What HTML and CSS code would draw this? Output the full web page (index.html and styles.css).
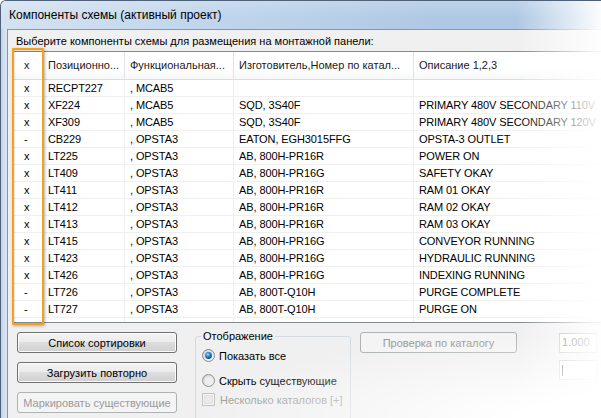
FILE: index.html
```html
<!DOCTYPE html>
<html lang="ru">
<head>
<meta charset="utf-8">
<title>Компоненты схемы</title>
<link rel="stylesheet" href="styles.css">
</head>
<body>
<div class="window">
  <div class="titlebar"><span class="title">Компоненты схемы (активный проект)</span></div>
  <div class="client">
    <div class="prompt">Выберите компоненты схемы для размещения на монтажной панели:</div>
    <div class="listview">
      <div class="lv-row lv-head">
        <div class="c c1">x</div>
        <div class="c">Позиционно...</div>
        <div class="c">Функциональная...</div>
        <div class="c">Изготовитель,Номер по катал...</div>
        <div class="c">Описание 1,2,3</div>
      </div>
      <div class="lv-row"><div class="c c1">x</div><div class="c">RECPT227</div><div class="c">, MCAB5</div><div class="c"></div><div class="c"></div></div>
      <div class="lv-row"><div class="c c1">x</div><div class="c">XF224</div><div class="c">, MCAB5</div><div class="c">SQD, 3S40F</div><div class="c">PRIMARY 480V SECONDARY 110V</div></div>
      <div class="lv-row"><div class="c c1">x</div><div class="c">XF309</div><div class="c">, MCAB5</div><div class="c">SQD, 3S40F</div><div class="c">PRIMARY 480V SECONDARY 120V</div></div>
      <div class="lv-row"><div class="c c1">-</div><div class="c">CB229</div><div class="c">, OPSTA3</div><div class="c">EATON, EGH3015FFG</div><div class="c">OPSTA-3 OUTLET</div></div>
      <div class="lv-row"><div class="c c1">x</div><div class="c">LT225</div><div class="c">, OPSTA3</div><div class="c">AB, 800H-PR16R</div><div class="c">POWER ON</div></div>
      <div class="lv-row"><div class="c c1">x</div><div class="c">LT409</div><div class="c">, OPSTA3</div><div class="c">AB, 800H-PR16G</div><div class="c">SAFETY OKAY</div></div>
      <div class="lv-row"><div class="c c1">x</div><div class="c">LT411</div><div class="c">, OPSTA3</div><div class="c">AB, 800H-PR16R</div><div class="c">RAM 01 OKAY</div></div>
      <div class="lv-row"><div class="c c1">x</div><div class="c">LT412</div><div class="c">, OPSTA3</div><div class="c">AB, 800H-PR16R</div><div class="c">RAM 02 OKAY</div></div>
      <div class="lv-row"><div class="c c1">x</div><div class="c">LT413</div><div class="c">, OPSTA3</div><div class="c">AB, 800H-PR16R</div><div class="c">RAM 03 OKAY</div></div>
      <div class="lv-row"><div class="c c1">x</div><div class="c">LT415</div><div class="c">, OPSTA3</div><div class="c">AB, 800H-PR16G</div><div class="c">CONVEYOR RUNNING</div></div>
      <div class="lv-row"><div class="c c1">x</div><div class="c">LT423</div><div class="c">, OPSTA3</div><div class="c">AB, 800H-PR16G</div><div class="c">HYDRAULIC RUNNING</div></div>
      <div class="lv-row"><div class="c c1">x</div><div class="c">LT426</div><div class="c">, OPSTA3</div><div class="c">AB, 800H-PR16G</div><div class="c">INDEXING RUNNING</div></div>
      <div class="lv-row"><div class="c c1">-</div><div class="c">LT726</div><div class="c">, OPSTA3</div><div class="c">AB, 800T-Q10H</div><div class="c">PURGE COMPLETE</div></div>
      <div class="lv-row"><div class="c c1">-</div><div class="c">LT727</div><div class="c">, OPSTA3</div><div class="c">AB, 800T-Q10H</div><div class="c">PURGE ON</div></div>
      <div class="lv-row lv-tail"><div class="c c1"></div><div class="c"></div><div class="c"></div><div class="c"></div><div class="c"></div></div>
    </div>
    <div class="controls">
      <div class="btncol">
        <div class="btn">Список сортировки</div>
        <div class="btn">Загрузить повторно</div>
        <div class="btn disabled">Маркировать существующие</div>
      </div>
      <div class="group">
        <span class="group-label">Отображение</span>
        <div class="opt">
          <svg class="mark" width="13" height="13" viewBox="0 0 13 13">
            <defs>
              <linearGradient id="ring1" x1="0" y1="0" x2="1" y2="1"><stop offset="0" stop-color="#cfcfcf"/><stop offset="1" stop-color="#fbfbfb"/></linearGradient>
              <radialGradient id="dot1" cx="0.4" cy="0.35" r="0.7"><stop offset="0" stop-color="#9ad8ff"/><stop offset="0.45" stop-color="#2f8ad6"/><stop offset="1" stop-color="#0a3a76"/></radialGradient>
            </defs>
            <circle cx="6.5" cy="6.5" r="6" fill="url(#ring1)" stroke="#7f8a96"/>
            <circle cx="6.5" cy="6.5" r="3.4" fill="url(#dot1)"/>
          </svg>
          <span>Показать все</span>
        </div>
        <div class="opt opt-wide">
          <svg class="mark" width="13" height="13" viewBox="0 0 13 13">
            <defs>
              <linearGradient id="ring2" x1="0" y1="0" x2="1" y2="1"><stop offset="0" stop-color="#cfcfcf"/><stop offset="1" stop-color="#fbfbfb"/></linearGradient>
            </defs>
            <circle cx="6.5" cy="6.5" r="6" fill="url(#ring2)" stroke="#8e8f8f"/>
            <circle cx="6.5" cy="6.5" r="3.6" fill="#eeeeee"/>
          </svg>
          <span>Скрыть существующие</span>
        </div>
        <div class="opt opt-disabled">
          <svg class="mark" width="13" height="13" viewBox="0 0 13 13">
            <rect x="0.5" y="0.5" width="12" height="12" fill="#f6f6f6" stroke="#c2c2c2"/>
            <rect x="2.5" y="2.5" width="8" height="8" fill="#e9e9e9" stroke="#e0e0e0"/>
          </svg>
          <span>Несколько каталогов [+]</span>
        </div>
      </div>
      <div class="btn disabled btn-check">Проверка по каталогу</div>
      <div class="tbcol">
        <div class="textbox ro">1.000</div>
        <div class="textbox"><span class="caret"></span></div>
      </div>
    </div>
  </div>
  <div class="highlight"></div>
  <div class="fade-right"></div>
  <div class="fade-bottom"></div>
</div>
</body>
</html>
```
FILE: styles.css
```css
html, body {
  margin: 0;
  padding: 0;
}
body {
  width: 601px;
  height: 418px;
  overflow: hidden;
  background: #ffffff;
  font-family: "Liberation Sans", Arial, sans-serif;
  color: #000;
}
.window {
  position: relative;
  width: 601px;
  height: 418px;
  box-sizing: border-box;
  display: flex;
  flex-direction: column;
  background: linear-gradient(to right, #c2d4ea 0, #dbe6f3 5px, #c9daee 7px);
  border-top: 1px solid #4f6079;
  border-left: 1px solid #4f6079;
  border-top-left-radius: 6px;
  overflow: hidden;
}
.titlebar {
  flex: none;
  height: 28px;
  display: flex;
  align-items: center;
  padding-left: 8px;
  background:
    linear-gradient(to bottom, rgba(255,255,255,0.18), rgba(255,255,255,0) 60%),
    linear-gradient(to right, #d4e2f1 0, #c1d6ec 200px, #afc9e4 430px);
}
.title {
  font-size: 12px;
  line-height: 14px;
  color: #000;
  white-space: nowrap;
}
.client {
  flex: 1;
  margin-left: 6px;
  border-top: 1px solid #8697ad;
  border-left: 1px solid #8697ad;
  background: #f0f0f0;
  padding-top: 5px;
}
.prompt {
  height: 13px;
  line-height: 13px;
  font-size: 11px;
  padding-left: 8px;
  white-space: nowrap;
}
.listview {
  margin-top: 3px;
  margin-left: 5px;
  width: 620px;
  height: 270px;
  border: 1px solid #828790;
  background: #ffffff;
  overflow: hidden;
}
.lv-row {
  display: grid;
  grid-template-columns: 29px 82px 109px 180px 300px;
  height: 17px;
  box-sizing: border-box;
  border-bottom: 1px solid #efefef;
  font-size: 11px;
  letter-spacing: -0.1px;
}
.lv-row .c {
  box-sizing: border-box;
  border-right: 1px solid #efefef;
  padding-left: 5px;
  line-height: 16px;
  white-space: nowrap;
  overflow: hidden;
}
.lv-row .c1 {
  padding-left: 10px;
}
.lv-head {
  height: 28px;
  border-bottom: 1px solid #dcdcdc;
  background: linear-gradient(to bottom, #ffffff 0, #ffffff 60%, #f7f8f9 100%);
  letter-spacing: 0;
}
.lv-head .c {
  line-height: 27px;
  border-right: 1px solid #e3e3e3;
  color: #1a1a1a;
}
.lv-tail {
  height: 4px;
  border-bottom: none;
}
.controls {
  display: flex;
  align-items: flex-start;
  margin-top: 9px;
  padding-left: 9px;
}
.btncol {
  display: flex;
  flex-direction: column;
  gap: 9px;
  width: 160px;
}
.btn {
  height: 21px;
  box-sizing: border-box;
  border: 1px solid #707070;
  border-radius: 3px;
  background: linear-gradient(to bottom, #f3f3f3 0, #ebebeb 50%, #dddddd 50%, #d0d0d0 100%);
  box-shadow: inset 0 0 0 1px #fbfbfb;
  font-size: 11px;
  display: flex;
  align-items: center;
  justify-content: center;
  white-space: nowrap;
}
.btn.disabled {
  border-color: #adb2b5;
  background: #f4f4f4;
  box-shadow: none;
  color: #9a9a9a;
}
.group {
  position: relative;
  margin-left: 18px;
  margin-top: 4px;
  width: 156px;
  height: 92px;
  box-sizing: border-box;
  border: 1px solid #d5dbe0;
  border-radius: 3px;
  padding-top: 12px;
  display: flex;
  flex-direction: column;
}
.group-label {
  position: absolute;
  top: -8px;
  left: 5px;
  padding: 0 2px;
  background: #f0f0f0;
  font-size: 11px;
  line-height: 14px;
  white-space: nowrap;
}
.opt {
  height: 13px;
  display: flex;
  align-items: center;
  gap: 4px;
  padding-left: 6px;
  font-size: 11px;
  white-space: nowrap;
}
.opt-wide {
  margin-top: 12px;
}
.opt-disabled {
  margin-top: 6px;
  color: #9d9d9d;
}
.opt-disabled span {
  padding-left: 1px;
}
.mark {
  flex: none;
  display: block;
}
.btn-check {
  margin-left: 9px;
  width: 157px;
}
.tbcol {
  margin-left: 42px;
  margin-top: 1px;
  display: flex;
  flex-direction: column;
  gap: 7px;
}
.textbox {
  position: relative;
  width: 38px;
  height: 20px;
  box-sizing: border-box;
  border: 1px solid #b5b9c1;
  border-top-color: #abadb3;
  background: #ffffff;
  font-size: 11px;
  line-height: 16px;
  padding-left: 2px;
}
.textbox.ro {
  color: #4a4a4a;
}
.caret {
  position: absolute;
  left: 2px;
  top: 4px;
  width: 1px;
  height: 11px;
  background: #000;
}
.highlight {
  position: absolute;
  left: 11px;
  top: 47px;
  width: 32px;
  height: 277px;
  box-sizing: border-box;
  border: 2px solid #f6a11e;
  border-radius: 1px;
  box-shadow: 1px 1px 3px rgba(0,0,0,0.3), inset 1px 1px 2px rgba(0,0,0,0.12);
}
.fade-right {
  position: absolute;
  top: -1px;
  right: 0;
  width: 84px;
  height: 420px;
  background: linear-gradient(to right, rgba(255,255,255,0), rgba(255,255,255,0.95));
  pointer-events: none;
}
.fade-bottom {
  position: absolute;
  right: 0;
  bottom: 0;
  width: 400px;
  height: 85px;
  background: radial-gradient(ellipse 100% 100% at 100% 100%, rgba(255,255,255,1) 20%, rgba(255,255,255,0.55) 55%, rgba(255,255,255,0) 100%);
  pointer-events: none;
}
```
